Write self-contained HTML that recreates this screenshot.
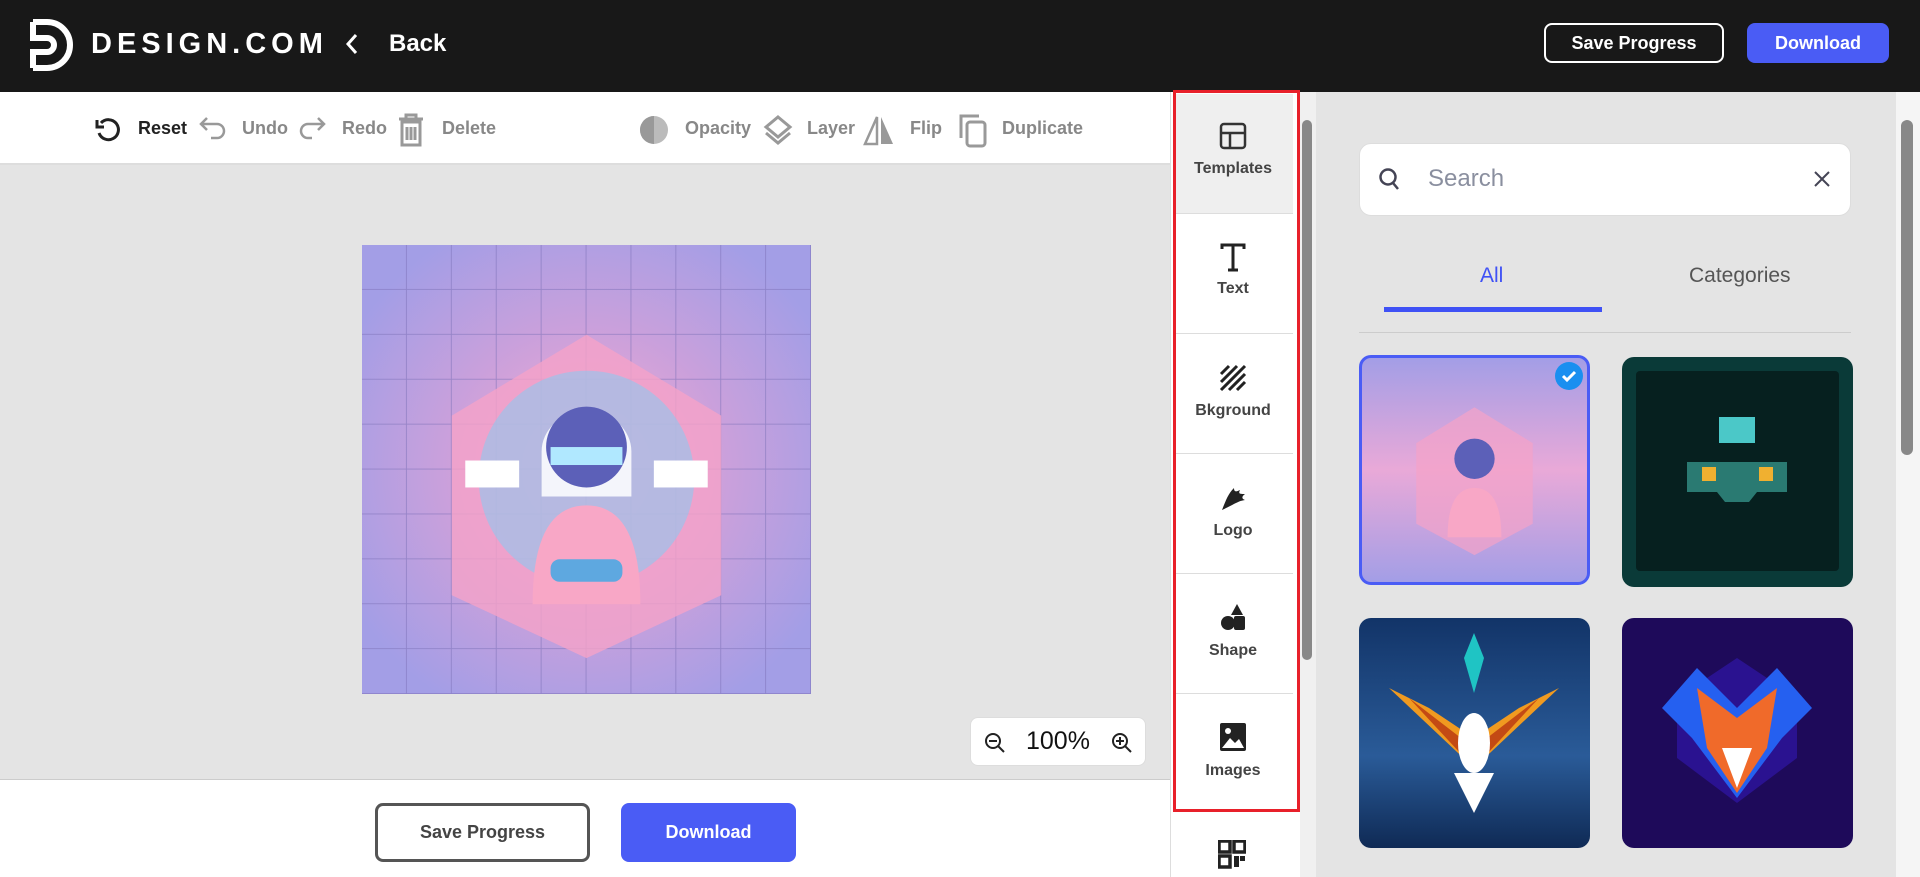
<!DOCTYPE html>
<html><head><meta charset="utf-8"><style>
*{margin:0;padding:0;box-sizing:border-box}
body{width:1920px;height:877px;overflow:hidden;background:#e4e4e4;font-family:"Liberation Sans",sans-serif;position:relative}
.a{position:absolute}
.hdr{left:0;top:0;width:1920px;height:92px;background:#181818}
.btn{display:flex;align-items:center;justify-content:center;font-weight:bold;border-radius:8px}
.tb{font-size:18px;font-weight:bold;color:#888;top:118px}
.tab{left:1173px;width:120px;height:120px;background:#fff;border-bottom:1px solid #ddd;text-align:center;font-size:16px;font-weight:bold;color:#444}
.tab svg{display:block;margin:0 auto}
.card{border-radius:12px;overflow:hidden;width:231px;height:230px}
</style></head><body>
<div class="a hdr"></div>
<svg class="a" style="left:29px;top:18px" width="44" height="54" viewBox="0 0 44 54"><path d="M4 4h14a20 20 0 0 1 0 46H4" fill="none" stroke="#fff" stroke-width="6"/><path d="M4 4v16h14a7 7 0 0 1 0 14H4v16" fill="none" stroke="#fff" stroke-width="6"/></svg>
<div class="a" style="left:91px;top:28px;color:#fff;font-size:29px;font-weight:bold;letter-spacing:5px">DESIGN.COM</div>
<svg class="a" style="left:345px;top:33px" width="14" height="22"><path d="M11 2L3 11l8 9" fill="none" stroke="#fff" stroke-width="3"/></svg>
<div class="a" style="left:389px;top:30px;color:#fff;font-size:24px;font-weight:bold">Back</div>
<div class="a btn" style="left:1544px;top:23px;width:180px;height:40px;border:2px solid #fff;color:#fff;font-size:18px">Save Progress</div>
<div class="a btn" style="left:1747px;top:23px;width:142px;height:40px;background:#4a5cf5;color:#fff;font-size:18px">Download</div>

<div class="a" style="left:0;top:92px;width:1170px;height:73px;background:#fff;border-bottom:2px solid #ddd"></div>
<svg class="a" style="left:94px;top:116px" width="28" height="28"><path d="M7 7A10 10 0 1 1 5 17" fill="none" stroke="#222" stroke-width="3"/><path d="M3 4v7h7" fill="none" stroke="#222" stroke-width="3"/></svg>
<div class="a tb" style="left:138px;color:#222">Reset</div>
<svg class="a" style="left:197px;top:116px" width="30" height="28"><path d="M4 8h16a7 7 0 0 1 0 14h-6M10 2L4 8l6 6" fill="none" stroke="#999" stroke-width="2.5"/></svg>
<div class="a tb" style="left:242px">Undo</div>
<svg class="a" style="left:296px;top:116px" width="32" height="28"><path d="M28 8H12a7 7 0 0 0 0 14h4M22 2l6 6-6 6" fill="none" stroke="#999" stroke-width="2.5"/></svg>
<div class="a tb" style="left:342px">Redo</div>
<svg class="a" style="left:396px;top:112px" width="30" height="36"><path d="M3 7h24M10 7V3h10v4M6 10h18v23H6zM11 15v13M15 15v13M19 15v13" fill="none" stroke="#999" stroke-width="3"/></svg>
<div class="a tb" style="left:442px">Delete</div>
<svg class="a" style="left:638px;top:114px" width="32" height="32"><circle cx="16" cy="16" r="14" fill="#bbb"/><path d="M16 2a14 14 0 0 0 0 28z" fill="#999"/></svg>
<div class="a tb" style="left:685px">Opacity</div>
<svg class="a" style="left:762px;top:114px" width="32" height="32"><path d="M16 3l12 10-12 10L4 13z M4 19l12 10 12-10" fill="none" stroke="#999" stroke-width="3"/></svg>
<div class="a tb" style="left:807px">Layer</div>
<svg class="a" style="left:862px;top:114px" width="34" height="32"><path d="M15 3L3 30h12z" fill="none" stroke="#999" stroke-width="2.5"/><path d="M19 3l12 27H19z" fill="#999"/></svg>
<div class="a tb" style="left:910px">Flip</div>
<svg class="a" style="left:956px;top:112px" width="34" height="36"><path d="M5 26V4h18" fill="none" stroke="#999" stroke-width="3"/><rect x="11" y="10" width="18" height="24" rx="3" fill="none" stroke="#999" stroke-width="3"/></svg>
<div class="a tb" style="left:1002px">Duplicate</div>

<svg class="a" style="left:362px;top:245px" width="449" height="449" viewBox="0 0 100 100">
<defs><radialGradient id="g" cx=".5" cy=".5" r=".6"><stop offset="0" stop-color="#f7a8cf"/><stop offset=".55" stop-color="#c8a0dc"/><stop offset="1" stop-color="#a39ee6"/></radialGradient>
<pattern id="p" width="10" height="10" patternUnits="userSpaceOnUse"><path d="M10 0V10H0" fill="none" stroke="#7d72b8" stroke-width=".4" opacity=".6"/></pattern></defs>
<rect width="100" height="100" fill="url(#g)"/><rect width="100" height="100" fill="url(#p)"/>
<path d="M50 20L80 38V78L50 92 20 78V38z" fill="#f5a2c8" opacity=".8"/>
<circle cx="50" cy="52" r="24" fill="#8ec8f0" opacity=".6"/>
<path d="M40 46a10 9 0 0 1 20 0v10H40z" fill="#fff" opacity=".85"/>
<circle cx="50" cy="45" r="9" fill="#5c60b8"/>
<rect x="42" y="45" width="16" height="4" fill="#b0e8ff"/>
<path d="M38 80q0-22 12-22t12 22z" fill="#f8a7c6"/>
<rect x="23" y="48" width="12" height="6" fill="#fff"/><rect x="65" y="48" width="12" height="6" fill="#fff"/>
<rect x="42" y="70" width="16" height="5" rx="2" fill="#5ea8e0"/>
</svg>

<div class="a" style="left:970px;top:717px;width:176px;height:49px;background:#fff;border-radius:8px;border:1px solid #ddd"></div>
<svg class="a" style="left:983px;top:731px" width="24" height="24"><circle cx="10" cy="10" r="7" fill="none" stroke="#222" stroke-width="2"/><path d="M6 10h8M15 15l6 6" stroke="#222" stroke-width="2"/></svg>
<div class="a" style="left:1026px;top:727px;font-size:25px;color:#111">100%</div>
<svg class="a" style="left:1110px;top:731px" width="24" height="24"><circle cx="10" cy="10" r="7" fill="none" stroke="#222" stroke-width="2"/><path d="M6 10h8M10 6v8M15 15l6 6" stroke="#222" stroke-width="2"/></svg>

<div class="a" style="left:0;top:779px;width:1170px;height:98px;background:#fff;border-top:1px solid #ccc"></div>
<div class="a btn" style="left:375px;top:803px;width:215px;height:59px;border:3px solid #555;color:#444;font-size:18px">Save Progress</div>
<div class="a btn" style="left:621px;top:803px;width:175px;height:59px;background:#4a5cf5;color:#fff;font-size:18px">Download</div>

<div class="a" style="left:1170px;top:92px;width:130px;height:785px;background:#fff;border-left:1px solid #ddd"></div>
<div class="a tab" style="top:94px;background:#efefef"><svg style="margin-top:28px" width="28" height="28"><rect x="2" y="2" width="24" height="24" rx="3" fill="none" stroke="#333" stroke-width="2.5"/><path d="M2 11h24M11 11v15" stroke="#333" stroke-width="2.5"/></svg><div style="margin-top:10px">Templates</div></div>
<div class="a tab" style="top:214px"><svg style="margin-top:28px" width="28" height="30"><path d="M3 7V3h22v4M14 3v25M9 28h10" fill="none" stroke="#222" stroke-width="3"/></svg><div style="margin-top:8px">Text</div></div>
<div class="a tab" style="top:334px"><svg style="margin-top:30px" width="28" height="28"><path d="M2 10L10 2M2 18L18 2M2 26L26 2M10 26L26 10M18 26l8-8" stroke="#222" stroke-width="3"/></svg><div style="margin-top:10px">Bkground</div></div>
<div class="a tab" style="top:454px"><svg style="margin-top:30px" width="30" height="28"><path d="M4 26C8 16 10 10 16 4c0 4 2 4 6 2-2 4 0 4 5 4-4 3-3 5 0 6-7 1-10 4-23 10z" fill="#222"/></svg><div style="margin-top:10px">Logo</div></div>
<div class="a tab" style="top:574px"><svg style="margin-top:28px" width="28" height="30"><path d="M18 2l6 11H12z" fill="#222"/><circle cx="9" cy="21" r="7" fill="#222"/><rect x="15" y="14" width="11" height="14" rx="2" fill="#222"/></svg><div style="margin-top:10px">Shape</div></div>
<div class="a tab" style="top:694px;border-bottom:none"><svg style="margin-top:28px" width="28" height="30"><rect x="1" y="1" width="26" height="28" rx="2" fill="#222"/><path d="M3 26l8-10 5 5 4-4 5 9z" fill="#fff"/><circle cx="9" cy="9" r="3" fill="#fff"/></svg><div style="margin-top:10px">Images</div></div>
<svg class="a" style="left:1218px;top:840px" width="28" height="30"><path d="M1 1h11v11H1zM16 1h11v11H16zM1 16h11v11H1z" fill="none" stroke="#222" stroke-width="3.5"/><rect x="16" y="16" width="5" height="11" fill="#222"/><rect x="22" y="16" width="5" height="5" fill="#222"/></svg>
<div class="a" style="left:1173px;top:90px;width:127px;height:722px;border:3px solid #e8202a"></div>
<div class="a" style="left:1300px;top:92px;width:16px;height:785px;background:#f0f0f0"></div>
<div class="a" style="left:1302px;top:120px;width:10px;height:540px;background:#888;border-radius:5px"></div>

<div class="a" style="left:1896px;top:92px;width:24px;height:785px;background:#f5f5f5"></div>
<div class="a" style="left:1901px;top:120px;width:12px;height:335px;background:#888;border-radius:6px"></div>

<div class="a" style="left:1359px;top:143px;width:492px;height:73px;background:#fff;border-radius:12px;border:1px solid #ddd"></div>
<svg class="a" style="left:1378px;top:167px" width="24" height="26"><circle cx="10" cy="10" r="7.5" fill="none" stroke="#445" stroke-width="2.5"/><path d="M15 16l5 6" stroke="#445" stroke-width="2.5"/></svg>
<div class="a" style="left:1428px;top:165px;font-size:24px;color:#8a8f9f">Search</div>
<svg class="a" style="left:1813px;top:170px" width="18" height="18"><path d="M2 2l14 14M16 2L2 16" stroke="#445" stroke-width="2"/></svg>
<div class="a" style="left:1480px;top:264px;font-size:21px;color:#3f51f5">All</div>
<div class="a" style="left:1689px;top:264px;font-size:21px;color:#555">Categories</div>
<div class="a" style="left:1384px;top:307px;width:218px;height:5px;background:#3f51f5"></div>
<div class="a" style="left:1359px;top:332px;width:492px;height:1px;background:#ccc"></div>

<div class="a card" style="left:1359px;top:355px;border:3px solid #4a5cf5;background:linear-gradient(#a39ee6,#e9a9d8 50%,#a39ee6)">
<svg width="225" height="224" viewBox="0 0 100 100"><path d="M50 22L76 38V74L50 88 24 74V38z" fill="#f5a2c8" opacity=".7"/><circle cx="50" cy="45" r="9" fill="#5c60b8"/><path d="M38 80q0-22 12-22t12 22z" fill="#f8a7c6"/></svg></div>
<div class="a" style="left:1555px;top:362px;width:28px;height:28px;border-radius:50%;background:#1a8ff0"><svg width="28" height="28"><path d="M8 14l4 4 8-8" fill="none" stroke="#fff" stroke-width="3"/></svg></div>
<div class="a card" style="left:1622px;top:357px;background:#0a3a38"><div style="margin:14px;height:200px;background:#06201f;border-radius:4px"></div>
<svg class="a" style="left:55px;top:55px" width="120" height="110"><rect x="42" y="5" width="36" height="26" fill="#4bc8c8"/><path d="M10 50h100v30H80l-8 10H48l-8-10H10z" fill="#2a7a72"/><rect x="25" y="55" width="14" height="14" fill="#f0b030"/><rect x="82" y="55" width="14" height="14" fill="#f0b030"/></svg></div>
<div class="a card" style="left:1359px;top:618px;background:linear-gradient(#123468,#2a5b98 60%,#0f2a55)">
<svg width="231" height="230"><path d="M115 150L30 70l40 20 45 30 45-30 40-20z" fill="#f09a20"/><path d="M115 150L50 80l65 50 65-50z" fill="#c34a14"/><ellipse cx="115" cy="125" rx="16" ry="30" fill="#fff"/><path d="M95 155l20 40 20-40z" fill="#fff"/><path d="M105 40l10-25 10 25-10 35z" fill="#1fc4c4"/></svg></div>
<div class="a card" style="left:1622px;top:618px;background:#1e0a5a">
<svg width="231" height="230"><path d="M115 40l60 40v60l-60 45-60-45V80z" fill="#2a1290"/><path d="M40 90l35-40 40 40 40-40 35 40-30 30-45 60-45-60z" fill="#2560f0"/><path d="M75 70l40 30 40-30-10 60-30 45-30-45z" fill="#f06a2a"/><path d="M100 130l15 40 15-40z" fill="#fff"/></svg></div>
</body></html>
